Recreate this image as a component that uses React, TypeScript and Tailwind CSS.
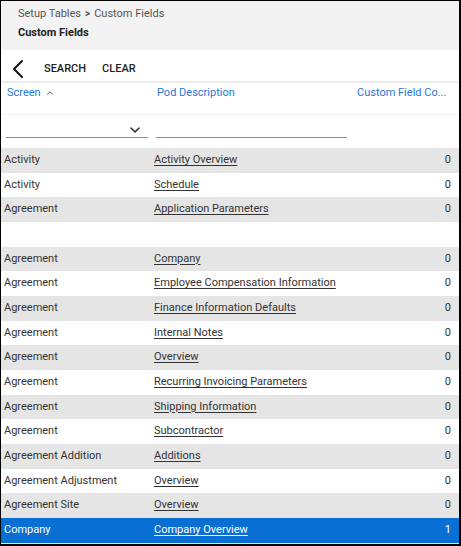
import { ChevronLeft, ChevronDown, ChevronUp } from 'lucide-react'

const rows: { screen: string; pod: string; count: string }[] = [
  { screen: 'Activity', pod: 'Activity Overview', count: '0' },
  { screen: 'Activity', pod: 'Schedule', count: '0' },
  { screen: 'Agreement', pod: 'Application Parameters', count: '0' },
  { screen: '', pod: '', count: '' },
  { screen: 'Agreement', pod: 'Company', count: '0' },
  { screen: 'Agreement', pod: 'Employee Compensation Information', count: '0' },
  { screen: 'Agreement', pod: 'Finance Information Defaults', count: '0' },
  { screen: 'Agreement', pod: 'Internal Notes', count: '0' },
  { screen: 'Agreement', pod: 'Overview', count: '0' },
  { screen: 'Agreement', pod: 'Recurring Invoicing Parameters', count: '0' },
  { screen: 'Agreement', pod: 'Shipping Information', count: '0' },
  { screen: 'Agreement', pod: 'Subcontractor', count: '0' },
  { screen: 'Agreement Addition', pod: 'Additions', count: '0' },
  { screen: 'Agreement Adjustment', pod: 'Overview', count: '0' },
  { screen: 'Agreement Site', pod: 'Overview', count: '0' },
  { screen: 'Company', pod: 'Company Overview', count: '1' },
  { screen: '', pod: '', count: '' },
]

export default function App() {
  const selected = 15
  return (
    <div
      className="w-[461px] h-[546px] overflow-hidden bg-white border-l border-t border-r-2 border-b-2 border-black text-[11px] text-[#333]"
      style={{ fontFamily: 'Roboto, "Liberation Sans", sans-serif' }}
    >
      <div className="bg-[#f3f3f3] h-[49px] pl-[17px] pt-[6px]">
        <div className="flex items-center gap-[4px] text-[#555] leading-[14px]">
          <span>Setup Tables</span>
          <span className="font-bold text-[10px]">&gt;</span>
          <span>Custom Fields</span>
        </div>
        <div className="font-bold text-[#222] mt-[5px] leading-[14px]">Custom Fields</div>
      </div>

      <div className="h-[33px] flex items-center pt-[7px] border-b-2 border-[#ececec]">
        <ChevronLeft className="w-[32px] h-[32px] ml-[1px] text-[#111]" strokeWidth={1.5} />
        <span className="ml-[10px] font-medium text-[#222]">SEARCH</span>
        <span className="ml-[16px] font-medium text-[#222]">CLEAR</span>
      </div>

      <div className="h-[32px] flex pt-[3px] border-b border-[#f1f1f1] text-[#2677d6]">
        <div className="w-[150px] pl-[6px] flex items-start gap-[4px] leading-[14px]">
          <span>Screen</span>
          <ChevronUp className="w-[10px] h-[10px] mt-[2px] text-[#333]" strokeWidth={2} />
        </div>
        <div className="w-[200px] pl-[6px] leading-[14px]">Pod Description</div>
        <div className="flex-1 pl-[6px] pr-[10px] leading-[14px] truncate">Custom Field Co...</div>
      </div>

      <div className="h-[33px] flex items-start pt-[8px]">
        <div className="w-[150px] pl-[5px] pr-[3px]">
          <div className="h-[15px] border-b border-[#8c8c8c] flex justify-end items-center pr-[5px]">
            <ChevronDown className="w-[16px] h-[16px] text-[#222]" strokeWidth={2} />
          </div>
        </div>
        <div className="w-[200px] pl-[5px] pr-[4px]">
          <div className="h-[15px] border-b border-[#8c8c8c]" />
        </div>
      </div>

      <div>
        {rows.map((r, i) => {
          const bg = i === selected ? 'bg-[#0a6fd2] text-white' : i % 2 === 0 ? 'bg-[#e5e5e5]' : 'bg-white'
          return (
            <div key={i} className={`h-[24.67px] flex items-center ${bg}`}>
              <div className="w-[150px] pl-[3px] truncate">{r.screen}</div>
              <div className="w-[200px] pl-[3px] truncate">
                {r.pod && <span className="underline underline-offset-2">{r.pod}</span>}
              </div>
              <div className="flex-1 text-right pr-[8px]">{r.count}</div>
            </div>
          )
        })}
      </div>
    </div>
  )
}
